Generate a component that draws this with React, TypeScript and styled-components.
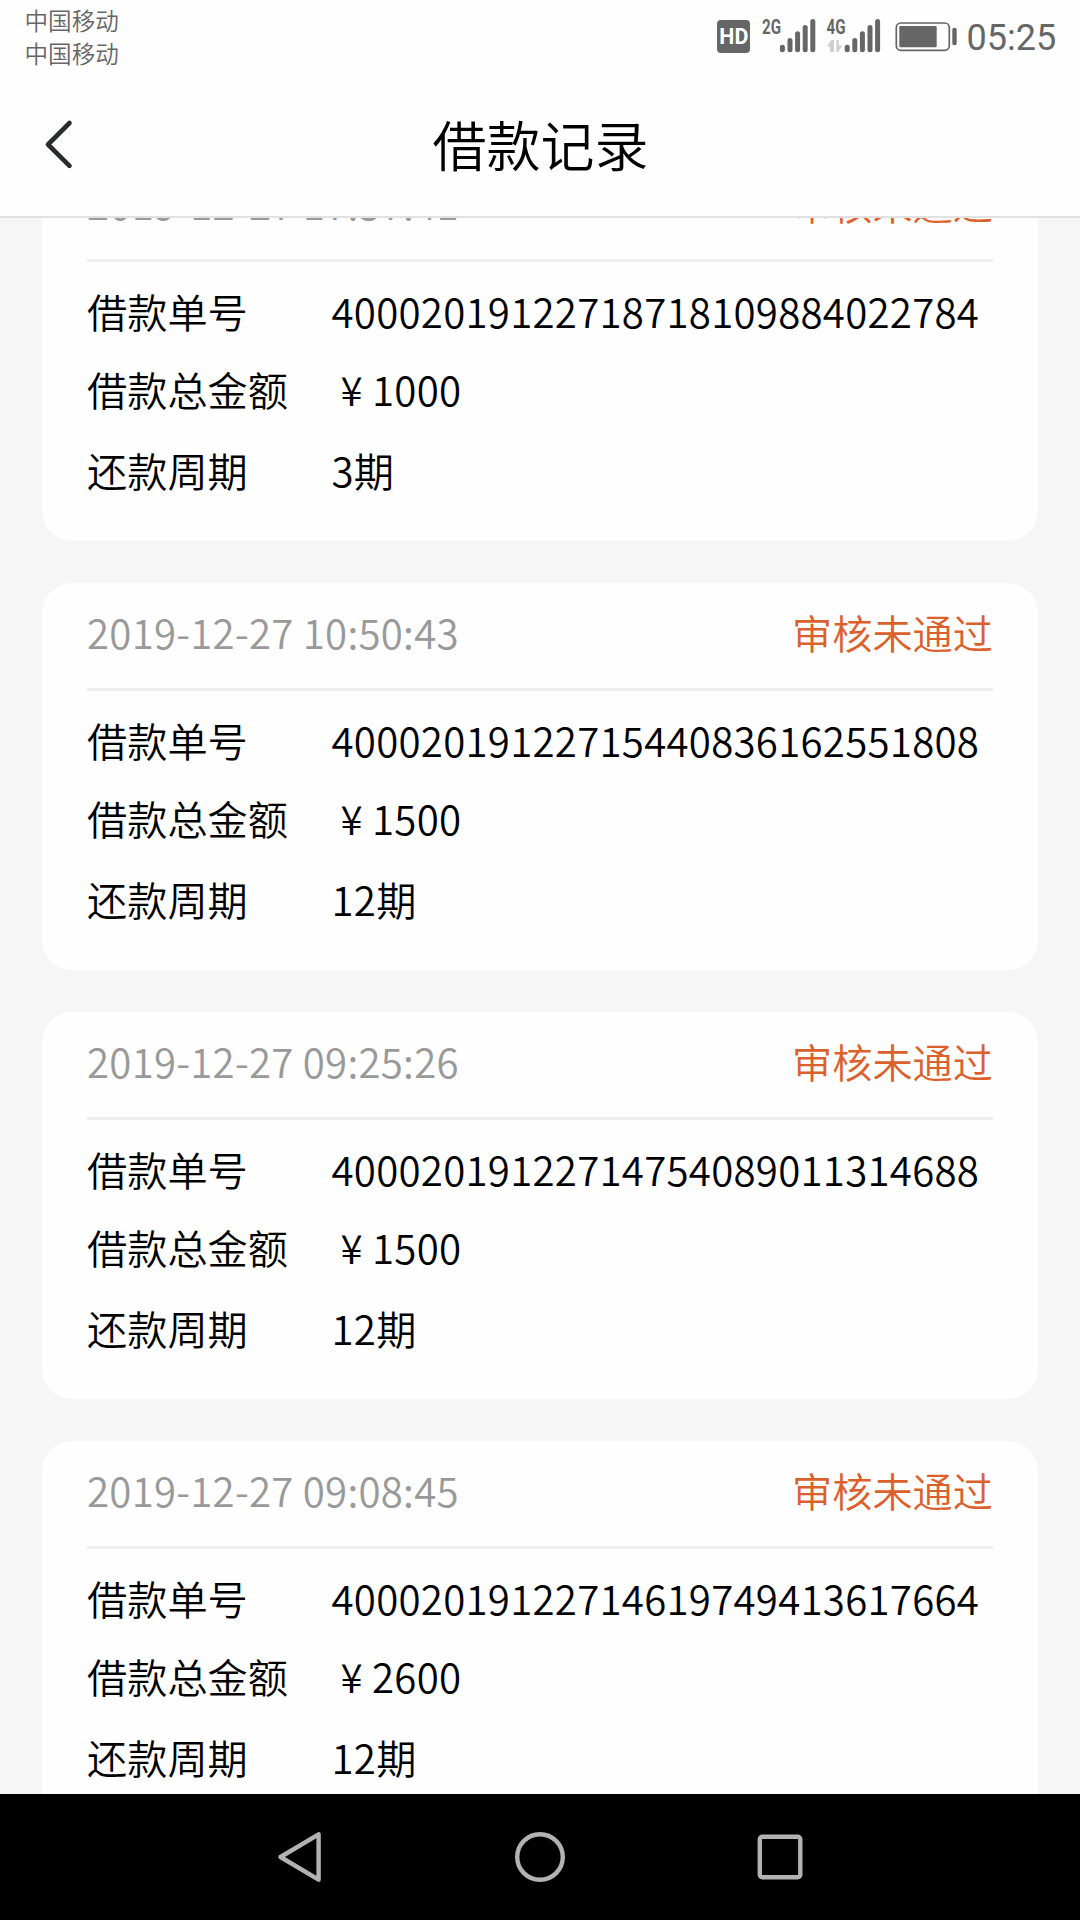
import React from "react";
import styled, { createGlobalStyle } from "styled-components";

const GlobalStyle = createGlobalStyle`
  * { box-sizing: border-box; }
  body {
    margin: 0;
    background: #f6f6f6;
    font-family: "Noto Sans CJK SC", "Noto Sans", sans-serif;
    font-weight: 350;
  }
`;

const Screen = styled.div`
  width: 1080px;
  height: 1920px;
  display: flex;
  flex-direction: column;
  overflow: hidden;
  background: #f6f6f6;
`;

const StatusBar = styled.div`
  height: 72px;
  flex: none;
  display: flex;
  justify-content: space-between;
  background: #fefefe;
  color: #666;
`;

const Carriers = styled.div`
  padding: 4px 0 0 24.5px;
  font-size: 23.6px;
  line-height: 33px;
`;

const StatusRight = styled.div`
  display: flex;
  width: 380px;
`;

const StatusIcons = styled.svg`
  flex: none;
  width: 266.5px;
  height: 72px;
  display: block;
`;

const Clock = styled.span`
  font-family: Roboto, sans-serif;
  font-weight: 400;
  font-size: 36px;
  line-height: 42px;
  padding-top: 17px;
`;

const TitleBar = styled.header`
  height: 146px;
  flex: none;
  display: grid;
  grid-template-columns: 120px 1fr 120px;
  align-items: center;
  background: #fefefe;
  border-bottom: 2px solid #e1e1e1;
`;

const BackButton = styled.button`
  border: 0;
  padding: 0 0 0 42px;
  background: none;
  display: flex;
`;

const Title = styled.h1`
  margin: 0;
  padding-left: 1px;
  font-size: 54px;
  line-height: 80px;
  font-weight: 350;
  text-align: center;
  color: #000;
`;

const List = styled.main`
  flex: 1;
  min-height: 0;
  overflow: hidden;
`;

const Scrolled = styled.div`
  margin-top: -64px;
  padding: 0 42px;
  display: flex;
  flex-direction: column;
  gap: 42px;
`;

const Card = styled.section`
  height: 387px;
  flex: none;
  padding: 0 45px;
  border-radius: 30px;
  background: #fefefe;
  font-size: 40.2px;
  line-height: 60px;
  color: #000;
`;

const CardHead = styled.div`
  height: 108px;
  padding-top: 19px;
  display: flex;
  justify-content: space-between;
  border-bottom: 3px solid #eee;
`;

const DateText = styled.span`
  color: #999;
  letter-spacing: 0.25px;
`;

const Status = styled.span`
  color: #dc602c;
`;

const Row = styled.div<{ $gap: number }>`
  display: flex;
  margin-top: ${(p) => p.$gap}px;
`;

const Label = styled.span`
  width: 244.5px;
  flex: none;
`;

const Value = styled.span`
  letter-spacing: 0.27px;
`;

const Currency = styled.span`
  display: inline-block;
  width: 40.5px;
  text-align: center;
`;

const NavBar = styled.nav`
  height: 126px;
  flex: none;
  display: flex;
  justify-content: center;
  align-items: center;
  background: #000;
`;

const NavButton = styled.button`
  width: 240px;
  height: 126px;
  border: 0;
  padding: 0;
  background: none;
  display: block;
`;

const records = [
  { date: "2019-12-27 17:37:41", no: "40002019122718718109884022784", amount: "1000", term: "3期" },
  { date: "2019-12-27 10:50:43", no: "40002019122715440836162551808", amount: "1500", term: "12期" },
  { date: "2019-12-27 09:25:26", no: "40002019122714754089011314688", amount: "1500", term: "12期" },
  { date: "2019-12-27 09:08:45", no: "40002019122714619749413617664", amount: "2600", term: "12期" },
];

const barTops = [47.2, 40.5, 33.8, 27.5, 21.5];

function Signal({ x }: { x: number }) {
  return (
    <g stroke="#666" strokeWidth="5" strokeLinecap="round">
      {barTops.map((top, i) => (
        <line key={i} x1={x + i * 7.6} x2={x + i * 7.6} y1={top} y2={49.7} />
      ))}
    </g>
  );
}

function Indicators() {
  return (
    <StatusIcons viewBox="0 0 266.5 72" fill="#666" fontFamily="Roboto, sans-serif" fontWeight="700">
      <rect x="17" y="20" width="33" height="33" rx="4" />
      <text x="19.3" y="44" fontSize="21.5" fill="#fff" fontWeight="700" textLength="29" lengthAdjust="spacingAndGlyphs">HD</text>
      <text x="62" y="34" fontSize="21" textLength="19" lengthAdjust="spacingAndGlyphs">2G</text>
      <Signal x={82.4} />
      <text x="126.5" y="34" fontSize="21" textLength="19" lengthAdjust="spacingAndGlyphs">4G</text>
      <path d="M127.300 45.500L131.500 40H134V52H130V46.500H127.300ZM136.300 40H138.800V45.500H142.500L138.300 52H136.300Z" fill="#d0d0d0" />
      <Signal x={147.2} />
      <rect x="196.300" y="23" width="53" height="27.300" rx="4.500" fill="none" stroke="#666" strokeWidth="1.700" />
      <rect x="199.300" y="26" width="37.400" height="21.200" rx="1" />
      <rect x="252.300" y="27.700" width="4.400" height="17.500" rx="2" />
    </StatusIcons>
  );
}

export default function App() {
  return (
    <Screen>
      <GlobalStyle />
      <StatusBar>
        <Carriers>
          <div>中国移动</div>
          <div>中国移动</div>
        </Carriers>
        <StatusRight>
          <Indicators />
          <Clock>05:25</Clock>
        </StatusRight>
      </StatusBar>
      <TitleBar>
        <BackButton aria-label="返回">
          <svg width="34" height="52" viewBox="0 0 34 52" fill="none" stroke="#2a2b2d" strokeWidth="4.600" strokeLinecap="round" strokeLinejoin="round">
            <path d="M27.500 5L6 26.500L27.500 47.800" />
          </svg>
        </BackButton>
        <Title>借款记录</Title>
      </TitleBar>
      <List>
        <Scrolled>
          {records.map((r) => (
            <Card key={r.no}>
              <CardHead>
                <DateText>{r.date}</DateText>
                <Status>审核未通过</Status>
              </CardHead>
              <Row $gap={19}>
                <Label>借款单号</Label>
                <Value>{r.no}</Value>
              </Row>
              <Row $gap={18}>
                <Label>借款总金额</Label>
                <Value>
                  <Currency>¥</Currency>
                  {r.amount}
                </Value>
              </Row>
              <Row $gap={21}>
                <Label>还款周期</Label>
                <Value>{r.term}</Value>
              </Row>
            </Card>
          ))}
        </Scrolled>
      </List>
      <NavBar>
        <NavButton aria-label="后退">
          <svg width="240" height="126" viewBox="0 0 240 126" fill="none" stroke="#b2b2b2" strokeWidth="4.400" strokeLinejoin="round">
            <path d="M100.500 63L138.600 40.300V85.700Z" />
          </svg>
        </NavButton>
        <NavButton aria-label="主页">
          <svg width="240" height="126" viewBox="0 0 240 126" fill="none" stroke="#b2b2b2" strokeWidth="4.400">
            <circle cx="120" cy="63" r="22.800" />
          </svg>
        </NavButton>
        <NavButton aria-label="最近任务">
          <svg width="240" height="126" viewBox="0 0 240 126" fill="none" stroke="#b2b2b2" strokeWidth="4.400">
            <rect x="99.800" y="42.800" width="40.500" height="40.500" rx="2.500" />
          </svg>
        </NavButton>
      </NavBar>
    </Screen>
  );
}
